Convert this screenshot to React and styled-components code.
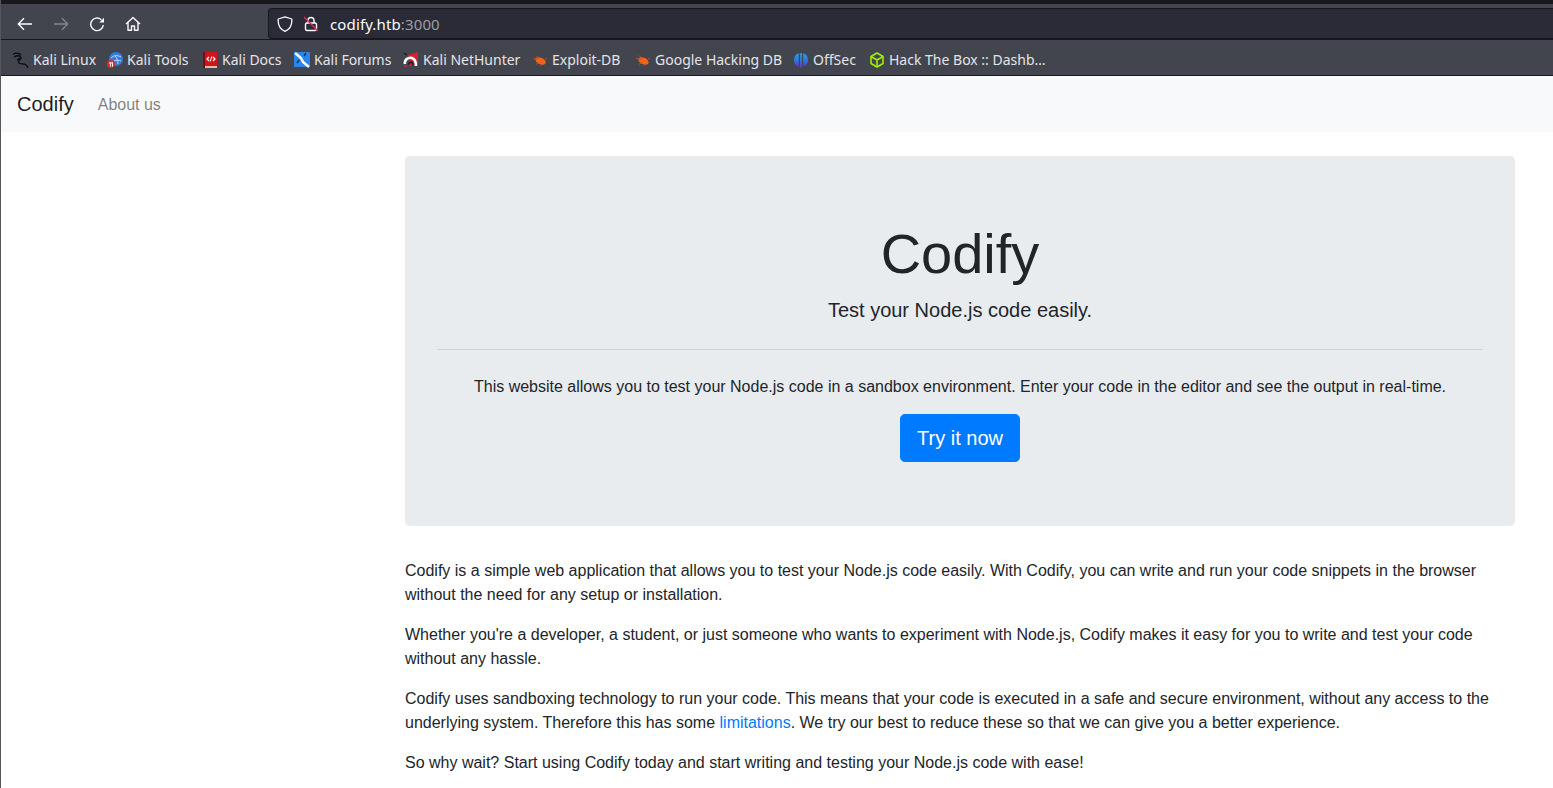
import React from "react";
import styled, { createGlobalStyle } from "styled-components";

const GlobalStyle = createGlobalStyle`
  html, body {
    margin: 0;
    padding: 0;
    height: 788px;
    overflow: hidden;
    background: #fff;
  }
`;

const Page = styled.div`
  height: 788px;
  overflow: hidden;
  font-family: "Liberation Sans", Arial, sans-serif;
  color: #212529;
  border-left: 1px solid #55565a;
`;

const WindowTop = styled.div`
  height: 4px;
  background: #18181d;
`;

const Toolbar = styled.div`
  height: 36px;
  box-sizing: border-box;
  padding-top: 4px;
  background: #43454e;
  display: flex;
  align-items: center;
  border-bottom: 1px solid #17171c;
`;

const NavButtons = styled.div`
  width: 267px;
  display: flex;
  align-items: center;
  gap: 20px;
  padding-left: 16px;
  box-sizing: border-box;
`;

const NavIcon = styled.svg`
  width: 16px;
  height: 16px;
  fill: none;
  stroke: currentColor;
  stroke-width: 1.4;
  color: ${(p) => (p.$off ? "#85868c" : "#fbfbfe")};
`;

const UrlBar = styled.div`
  flex: 1;
  height: 31px;
  box-sizing: border-box;
  background: #2a2b36;
  border: 1px solid #17171c;
  border-right: none;
  border-radius: 4px 0 0 4px;
  display: flex;
  align-items: center;
  padding-left: 7.5px;
  gap: 10.75px;
  font-family: "Noto Sans", sans-serif;
  font-size: 15px;
  letter-spacing: 0.13px;
  color: #fbfbfe;
`;

const Port = styled.span`
  color: #9c9da3;
`;

const BookmarkBar = styled.div`
  height: 36px;
  box-sizing: border-box;
  padding: 4px 0 0 12px;
  background: #43454e;
  display: flex;
  align-items: center;
  gap: 12px;
  border-bottom: 1px solid #17171c;
`;

const Bookmark = styled.div`
  display: flex;
  align-items: center;
  gap: 4px;
  font-family: "Noto Sans", sans-serif;
  font-size: 14px;
  color: #e4e4e7;
`;

const BookmarkLabel = styled.span`
  width: ${(p) => p.$w}px;
  white-space: nowrap;
`;

const Favicon = styled.svg`
  width: 16px;
  height: 16px;
  flex: none;
`;

const Navbar = styled.nav`
  height: 56px;
  background: #f8f9fa;
  display: flex;
  align-items: center;
  padding: 0 16px;
  gap: 24px;
`;

const Brand = styled.a`
  font-size: 20px;
  color: rgba(0, 0, 0, 0.9);
`;

const NavLink = styled.a`
  font-size: 16px;
  padding-top: 2px;
  color: rgba(0, 0, 0, 0.5);
`;

const Main = styled.main`
  width: 1110px;
  margin-left: 404px;
  padding-top: 24px;
`;

const Jumbotron = styled.section`
  background: #e9ecef;
  border-radius: 4.8px;
  height: 370px;
  box-sizing: border-box;
  padding: 64px 32px;
  text-align: center;
`;

const Title = styled.h1`
  margin: 0 0 8px;
  font-size: 56px;
  font-weight: 300;
  line-height: 67px;
`;

const Lead = styled.p`
  margin: 0;
  font-size: 20px;
  font-weight: 300;
  line-height: 30px;
`;

const Rule = styled.hr`
  margin: 24px 0 25px;
  border: 0;
  border-top: 1px solid rgba(0, 0, 0, 0.1);
`;

const Text = styled.p`
  margin: 0 0 16px;
  font-size: 16px;
  line-height: 24px;
`;

const Intro = styled(Text)`
  margin-bottom: 15px;
`;

const TryButton = styled.a`
  display: inline-block;
  background: #007bff;
  color: #fff;
  font-size: 20px;
  line-height: 30px;
  padding: 8px 16px;
  border: 1px solid #007bff;
  border-radius: 4.8px;
`;

const Copy = styled.div`
  margin-top: 33px;
`;

const Link = styled.a`
  color: #007bff;
`;

const KaliIcon = () => (
  <Favicon viewBox="0 0 16 16" fill="none" stroke="#0b0b0d" strokeWidth="1.3">
    <path d="M0 2.5C3 .5 6 1 8 3" />
    <path d="M1 5c3-1.500 6-1.500 7 .5 1 2-3 2.500-2.500 5 1 2 5 .8 7 2 1.500 1 2 2 2.500 3.500" />
    <path d="M4 8c1 0 2-1 3-2" />
  </Favicon>
);

const ToolsIcon = () => (
  <Favicon viewBox="0 0 16 16">
    <circle cx="9" cy="7" r="7" fill="#2f7de1" />
    <path d="M4 6c3-3 6-3 10-1M8 4c2 2 3 5 3 8M7 9c2-1 5-1 7 0" stroke="#cfe3fa" strokeWidth="0.9" fill="none" />
    <circle cx="4" cy="12" r="4" fill="#e8262c" />
    <rect x="2" y="10.500" width="4" height="1" fill="#fff" />
    <rect x="3" y="10.500" width="1" height="4" fill="#fff" />
    <rect x="5" y="10.500" width="1" height="4" fill="#fff" />
  </Favicon>
);

const DocsIcon = () => (
  <Favicon viewBox="0 0 16 16">
    <rect x="2" y="0" width="13" height="15" fill="#d0141c" />
    <rect x="2" y="14" width="13" height="2" fill="#e9b9a0" />
    <rect x="1" y="0" width="2" height="16" fill="#7a0c12" />
    <path d="M7 5 5 7l2 2M11 5l2 2-2 2" stroke="#fff" strokeWidth="1.2" fill="none" />
    <path d="M9.800 4.500 8.200 9.500" stroke="#fff" strokeWidth="1" />
  </Favicon>
);

const ForumsIcon = () => (
  <Favicon viewBox="0 0 16 16">
    <rect x="0" y="0" width="16" height="15" rx="1" fill="#2a86ea" />
    <path d="M1 1l6 5 2 4 6 5" stroke="#fff" strokeWidth="2.4" fill="none" />
    <path d="M5 8l-2 3M10 4l2-3" stroke="#14304f" strokeWidth="1.4" />
  </Favicon>
);

const HunterIcon = () => (
  <Favicon viewBox="0 0 16 16">
    <path d="M5 3 15 0v11l-2 3H7z" fill="#d81e33" />
    <path d="M1 1l3 2" stroke="#17171c" strokeWidth="1.4" />
    <path d="M2 12c-1-4 3-7 7-6 3 1 4 4 4 8" stroke="#fff" strokeWidth="2.6" fill="none" />
    <path d="M6 12.500c0-2 2-3 3-2s1 2 1 3" stroke="#17171c" strokeWidth="1.6" fill="none" />
    <path d="M1 14h3" stroke="#d81e33" strokeWidth="1.4" />
  </Favicon>
);

const BugIcon = () => (
  <Favicon viewBox="0 0 16 16">
    <ellipse cx="8.500" cy="9" rx="5.500" ry="3.200" transform="rotate(25 8.500 9)" fill="#f0631a" />
    <path d="M1 6.500l5 1M4 3.500l3 3M4 12.500l2.500-2M9 14l.5-2M13 7l2-.5" stroke="#b8552c" strokeWidth="0.9" />
  </Favicon>
);

const OffSecIcon = () => (
  <Favicon viewBox="0 0 16 16">
    <defs>
      <linearGradient id="offsecFill" x1="0" y1="0" x2="0" y2="1">
        <stop offset="0" stopColor="#27a2e6" />
        <stop offset="0.6" stopColor="#2f6fe0" />
        <stop offset="1" stopColor="#6a30d0" />
      </linearGradient>
    </defs>
    <path d="M5.800 1.300C3 2 1 4.500 1 8s2 6 4.800 6.700z" fill="url(#offsecFill)" />
    <path d="M10.200 1.300C13 2 15 4.500 15 8s-2 6-4.800 6.700z" fill="url(#offsecFill)" />
    <rect x="7.100" y="1" width="1.800" height="15" fill="url(#offsecFill)" />
  </Favicon>
);

const HtbIcon = () => (
  <Favicon viewBox="0 0 16 16" fill="none" stroke="#9fef00" strokeWidth="1.6" strokeLinejoin="round">
    <path d="M8 1l6 3.500v7L8 15l-6-3.500v-7z" />
    <path d="M2 4.500 8 8l6-3.500M8 8v7" />
  </Favicon>
);

const bookmarks = [
  { label: "Kali Linux", Icon: KaliIcon, w: 62 },
  { label: "Kali Tools", Icon: ToolsIcon, w: 63 },
  { label: "Kali Docs", Icon: DocsIcon, w: 60 },
  { label: "Kali Forums", Icon: ForumsIcon, w: 77 },
  { label: "Kali NetHunter", Icon: HunterIcon, w: 97 },
  { label: "Exploit-DB", Icon: BugIcon, w: 71 },
  { label: "Google Hacking DB", Icon: BugIcon, w: 126 },
  { label: "OffSec", Icon: OffSecIcon, w: 44 },
  { label: "Hack The Box :: Dashb…", Icon: HtbIcon, w: 157 },
];

function App() {
  return (
    <Page>
      <GlobalStyle />
      <WindowTop />
      <Toolbar>
        <NavButtons>
          <NavIcon viewBox="0 0 16 16">
            <path d="M15 8H1.500M7 2.300 1.300 8 7 13.700" />
          </NavIcon>
          <NavIcon viewBox="0 0 16 16" $off>
            <path d="M1 8h13.500M9 2.300 14.700 8 9 13.700" />
          </NavIcon>
          <NavIcon viewBox="0 0 16 16">
            <path d="M12.300 3.700A6.300 6.300 0 1 0 14.300 9" />
            <path d="M15 1.800V6.500H10.300z" fill="currentColor" stroke="none" />
          </NavIcon>
          <NavIcon viewBox="0 0 16 16">
            <path d="M1 8 8 1.500 15 8M3 6.500V14.300h3.500V10h3v4.300H13V6.500" strokeLinejoin="round" />
          </NavIcon>
        </NavButtons>
        <UrlBar>
          <Favicon viewBox="0 0 16 16" fill="none" stroke="#fbfbfe" strokeWidth="1.300">
            <path d="M8 .8 14.800 3c.4 5.500-1.500 10-6.800 12.300C2.700 13 .8 8.500 1.200 3z" strokeLinejoin="round" />
          </Favicon>
          <Favicon viewBox="0 0 16 16" fill="none">
            <rect x="2.500" y="7" width="11" height="7.500" rx="1.500" stroke="#fbfbfe" strokeWidth="1.400" />
            <path d="M5 7V4.500a3 3 0 0 1 6 0V7" stroke="#fbfbfe" strokeWidth="1.400" />
            <path d="M1 1l14 14" stroke="#e0245e" strokeWidth="1.400" />
          </Favicon>
          <span>codify.htb<Port>:3000</Port></span>
        </UrlBar>
      </Toolbar>
      <BookmarkBar>
        {bookmarks.map(({ label, Icon, w }) => (
          <Bookmark key={label}>
            <Icon />
            <BookmarkLabel $w={w}>{label}</BookmarkLabel>
          </Bookmark>
        ))}
      </BookmarkBar>
      <Navbar>
        <Brand>Codify</Brand>
        <NavLink>About us</NavLink>
      </Navbar>
      <Main>
        <Jumbotron>
          <Title>Codify</Title>
          <Lead>Test your Node.js code easily.</Lead>
          <Rule />
          <Intro>This website allows you to test your Node.js code in a sandbox environment. Enter your code in the editor and see the output in real-time.</Intro>
          <TryButton>Try it now</TryButton>
        </Jumbotron>
        <Copy>
          <Text>Codify is a simple web application that allows you to test your Node.js code easily. With Codify, you can write and run your code snippets in the browser without the need for any setup or installation.</Text>
          <Text>Whether you're a developer, a student, or just someone who wants to experiment with Node.js, Codify makes it easy for you to write and test your code without any hassle.</Text>
          <Text>Codify uses sandboxing technology to run your code. This means that your code is executed in a safe and secure environment, without any access to the underlying system. Therefore this has some <Link>limitations</Link>. We try our best to reduce these so that we can give you a better experience.</Text>
          <Text>So why wait? Start using Codify today and start writing and testing your Node.js code with ease!</Text>
        </Copy>
      </Main>
    </Page>
  );
}

export default App;
